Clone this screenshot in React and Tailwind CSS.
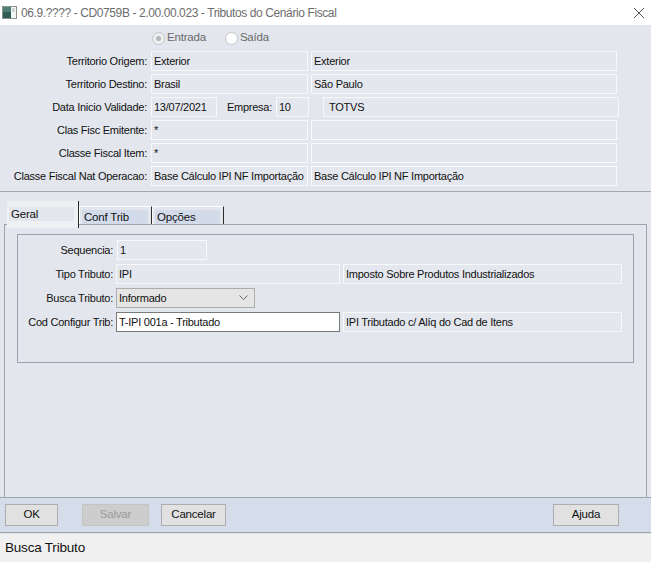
import React from "react";

const F = "font-['Liberation_Sans',Arial,sans-serif]";

function Field({ w, children, className = "" }) {
  return (
    <div
      className={`h-[20px] ${w} shrink-0 border border-[#f7f8fa] bg-[#e4e7ee] px-[2px] text-[11px] tracking-[-0.25px] leading-[18px] text-[#111] whitespace-nowrap overflow-hidden ${className}`}
    >
      {children}
    </div>
  );
}

function Row({ label, children }) {
  return (
    <div className="flex items-center h-[20px]">
      <div className="w-[148px] shrink-0 pr-[1px] text-right text-[11px] tracking-[-0.25px] text-[#111] whitespace-nowrap">{label}</div>
      <div className="flex items-center gap-[3px] ml-[3px]">{children}</div>
    </div>
  );
}

function GRow({ label, children }) {
  return (
    <div className="flex items-center h-[20px]">
      <div className="w-[95px] shrink-0 text-right text-[11px] tracking-[-0.25px] text-[#111] whitespace-nowrap">{label}</div>
      <div className="flex items-center gap-[3px] ml-[3px]">{children}</div>
    </div>
  );
}

function Btn({ children, w, disabled }) {
  return (
    <div
      className={`h-[22px] ${w} flex items-center justify-center text-[11.5px] tracking-[-0.2px] border ${
        disabled ? "bg-[#cdcdcd] border-[#c4c4c4] text-[#9a9a9a]" : "bg-[#e1e1e1] border-[#adadad] text-[#111]"
      }`}
    >
      {children}
    </div>
  );
}

export default function App() {
  return (
    <div className={`w-[651px] h-[562px] flex flex-col bg-[#e3e6ed] ${F} overflow-hidden`}>
      {/* Title bar */}
      <div className="h-[25px] shrink-0 bg-white flex items-center">
        <svg width="15" height="13" viewBox="0 0 15 13" className="ml-[2px]">
          <rect x="0.5" y="0.5" width="14" height="12" fill="#f4f6f6" stroke="#8a9192" />
          <rect x="1" y="1" width="8" height="11" fill="#2f5d56" />
          <rect x="1" y="1" width="8" height="5" fill="#4f7f74" />
          <rect x="10" y="2" width="3" height="4" fill="#cfd6d6" />
        </svg>
        <span className="ml-[4px] text-[12px] tracking-[-0.4px] text-[#6e6e6e] whitespace-nowrap">
          06.9.???? - CD0759B - 2.00.00.023 - Tributos do Cenário Fiscal
        </span>
        <div className="flex-1" />
        <svg width="12" height="12" viewBox="0 0 12 12" className="mr-[6px]">
          <path d="M1 1 L11 11 M11 1 L1 11" stroke="#555" strokeWidth="1" />
        </svg>
      </div>

      {/* Top form */}
      <div className="shrink-0 flex flex-col gap-[3px] pt-[4px]">
        <div className="h-[18px] flex items-center mb-[1px]">
          <div className="ml-[152px] flex items-center">
            <div className="w-[13px] h-[13px] rounded-full border border-[#c4c6ca] bg-[#eeeff1] flex items-center justify-center">
              <div className="w-[5px] h-[5px] rounded-full bg-[#b4b6ba]" />
            </div>
            <span className="ml-[2px] text-[11.5px] tracking-[-0.2px] text-[#6a6a6a]">Entrada</span>
          </div>
          <div className="ml-[19px] flex items-center">
            <div className="w-[13px] h-[13px] rounded-full border border-[#c4c6ca] bg-white" />
            <span className="ml-[2px] text-[11.5px] tracking-[-0.2px] text-[#6a6a6a]">Saída</span>
          </div>
        </div>
        <Row label="Territorio Origem:">
          <Field w="w-[157px]">Exterior</Field>
          <Field w="w-[306px]">Exterior</Field>
        </Row>
        <Row label="Territorio Destino:">
          <Field w="w-[157px]">Brasil</Field>
          <Field w="w-[306px]">São Paulo</Field>
        </Row>
        <Row label="Data Inicio Validade:">
          <Field w="w-[66px]">13/07/2021</Field>
          <div className="w-[53px] text-right text-[11px] tracking-[-0.25px] text-[#111] pr-[1px]">Empresa:</div>
          <Field w="w-[33px]">10</Field>
          <Field w="w-[296px]" className="ml-[11px] pl-[5px]">TOTVS</Field>
        </Row>
        <Row label="Clas Fisc Emitente:">
          <Field w="w-[157px]">*</Field>
          <Field w="w-[306px]"></Field>
        </Row>
        <Row label="Classe Fiscal Item:">
          <Field w="w-[157px]">*</Field>
          <Field w="w-[306px]"></Field>
        </Row>
        <Row label="Classe Fiscal Nat Operacao:">
          <Field w="w-[157px]">Base Cálculo IPI NF Importação</Field>
          <Field w="w-[306px]">Base Cálculo IPI NF Importação</Field>
        </Row>
      </div>

      {/* separator */}
      <div className="h-[1px] shrink-0 bg-[#a3a7b1] mt-[5px]" />

      {/* tabs */}
      <div className="h-[32px] shrink-0 flex items-end pl-[7px]">
        <div className="relative z-10 -mb-[4px] w-[72px] h-[27px] bg-[#eef0f4] border-r border-[#2a2a2a] pt-[6px] pl-[2px] pr-[4px]">
          <div className="h-[14px] bg-[#e3e6ec] text-[11.5px] tracking-[-0.2px] leading-[14px] pl-[2px] text-[#111]">Geral</div>
        </div>
        <div className="w-[73px] h-[18px] border-t border-l border-[#fbfbfc] border-r-[#2a2a2a] border-r pt-[3px] pl-[2px] pr-[3px]">
          <div className="h-[14px] bg-[#d3dbeb] text-[11.5px] tracking-[-0.2px] leading-[15px] pl-[2px] text-[#111]">Conf Trib</div>
        </div>
        <div className="w-[72px] h-[18px] border-t border-l border-[#fbfbfc] border-r-[#2a2a2a] border-r pt-[3px] pl-[2px] pr-[3px]">
          <div className="h-[14px] bg-[#d3dbeb] text-[11.5px] tracking-[-0.2px] leading-[15px] pl-[2px] text-[#111]">Opções</div>
        </div>
      </div>

      {/* panel */}
      <div className="flex-1 mx-[4px] border-t border-l border-r border-[#9ea3ae] pt-[9px] px-[12px]">
        <div className="h-[129px] border border-[#9a9fab] pt-[5px] flex flex-col gap-[4px]">
          <GRow label="Sequencia:">
            <Field w="w-[90px]" className="ml-[1px]">1</Field>
          </GRow>
          <GRow label="Tipo Tributo:">
            <Field w="w-[224px]">IPI</Field>
            <Field w="w-[279px]">Imposto Sobre Produtos Industrializados</Field>
          </GRow>
          <GRow label="Busca Tributo:">
            <div className="h-[20px] w-[139px] border border-[#adadad] bg-[#e5e5e5] flex items-center pl-[2px] text-[11px] tracking-[-0.25px] text-[#111]">
              <span className="flex-1">Informado</span>
              <svg width="9" height="6" viewBox="0 0 9 6" className="mr-[6px]">
                <path d="M0.5 0.5 L4.5 4.5 L8.5 0.5" fill="none" stroke="#6a6a6a" strokeWidth="1" />
              </svg>
            </div>
          </GRow>
          <GRow label="Cod Configur Trib:">
            <div className="h-[20px] w-[224px] border border-[#7a7a7a] bg-white pl-[2px] text-[11px] tracking-[-0.25px] leading-[18px] text-[#111] whitespace-nowrap">
              T-IPI 001a - Tributado
            </div>
            <Field w="w-[279px]">IPI Tributado c/ Alíq do Cad de Itens</Field>
          </GRow>
        </div>
      </div>

      {/* button bar */}
      <div className="h-[36px] shrink-0 bg-[#d5ddeb] border-t border-b border-[#9ea3ae] flex items-center pl-[5px] pr-[32px]">
        <Btn w="w-[53px]">OK</Btn>
        <div className="ml-[24px]">
          <Btn w="w-[67px]" disabled>Salvar</Btn>
        </div>
        <div className="ml-[12px]">
          <Btn w="w-[65px]">Cancelar</Btn>
        </div>
        <div className="flex-1" />
        <Btn w="w-[66px]">Ajuda</Btn>
      </div>

      {/* status */}
      <div className="h-[29px] shrink-0 bg-[#f0f0f0] border-t border-[#e2e2e2] flex items-center pl-[5px] text-[13.5px] tracking-[-0.2px] text-[#111]">
        Busca Tributo
      </div>
    </div>
  );
}
